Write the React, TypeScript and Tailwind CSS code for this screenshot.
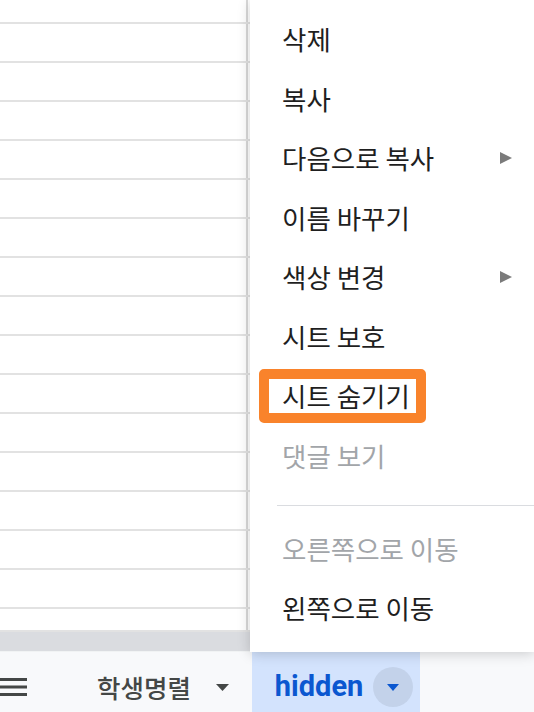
import React from 'react';

type Item = { label: string; disabled?: boolean; submenu?: boolean; marked?: boolean };

const topItems: Item[] = [
  { label: '삭제' },
  { label: '복사' },
  { label: '다음으로 복사', submenu: true },
  { label: '이름 바꾸기' },
  { label: '색상 변경', submenu: true },
  { label: '시트 보호' },
  { label: '시트 숨기기', marked: true },
  { label: '댓글 보기', disabled: true },
];

const moveItems: Item[] = [
  { label: '오른쪽으로 이동', disabled: true },
  { label: '왼쪽으로 이동' },
];

// row heights of the sheet behind the menu (border-box, 2px bottom border included)
const rowHeights = [
  'h-[24px]', 'h-[39px]', 'h-[39px]', 'h-[39px]', 'h-[39px]', 'h-[39px]', 'h-[39px]', 'h-[39px]',
  'h-[39px]', 'h-[39px]', 'h-[39px]', 'h-[39px]', 'h-[39px]', 'h-[39px]', 'h-[39px]', 'h-[39px]',
  'h-[23px]',
];

function MenuRow({ item }: { item: Item }) {
  return (
    <div className="flex h-[59.6px] items-center justify-between pl-[32px] pr-[22px]">
      {item.marked ? (
        <span className="-ml-[23px] inline-block rounded-[5px] border-[10px] border-[#f9832b] pl-[13px] pr-[6px] leading-[34px] text-[#1f1f1f]">
          {item.label}
        </span>
      ) : (
        <span className={item.disabled ? 'text-[#a2a5a9]' : 'text-[#1f1f1f]'}>{item.label}</span>
      )}
      {item.submenu && (
        <svg width="12" height="12" viewBox="0 0 12 12">
          <polygon points="0,0 12,6 0,12" fill="#7b7b7b" />
        </svg>
      )}
    </div>
  );
}

export default function App() {
  return (
    <div className="relative h-[712px] w-[534px] overflow-hidden bg-white font-['Noto_Sans_CJK_KR','Noto_Sans',sans-serif]">
      {/* Sheet grid */}
      <div className="flex flex-col">
        {rowHeights.map((h, i) => (
          <div key={i} className={`flex border-b-2 border-[#e2e2e2] ${h}`}>
            <div className="w-[248px] border-r-2 border-[#d9d9d9]" />
            <div className="flex-1" />
          </div>
        ))}
      </div>

      {/* Horizontal scrollbar */}
      <div className="h-[19px] bg-[#dadce0]" />
      <div className="h-px bg-[#f1f3f4]" />

      {/* Sheet tabs */}
      <div className="flex h-[70px] items-stretch bg-[#f8f9fb]">
        <div className="flex items-center">
          <svg width="27" height="18" viewBox="0 0 27 18">
            <rect x="0" y="0" width="27" height="3" fill="#444746" />
            <rect x="0" y="7.5" width="27" height="3" fill="#444746" />
            <rect x="0" y="15" width="27" height="3" fill="#444746" />
          </svg>
        </div>
        <div className="ml-[70px] flex items-center gap-[25px]">
          <span className="text-[25.5px] font-medium text-[#444746]">학생명렬</span>
          <svg width="13" height="7" viewBox="0 0 13 7">
            <polygon points="0,0 13,0 6.5,7" fill="#444746" />
          </svg>
        </div>
        <div className="ml-[23px] flex items-center bg-[#d3e3fd] pl-[23px] pr-[7px]">
          <span className="font-['Roboto',sans-serif] text-[29px] font-bold text-[#0b57d0]">hidden</span>
          <div className="ml-[10px] flex h-[40px] w-[40px] items-center justify-center rounded-full bg-[#c3d2ea]">
            <svg width="12" height="7" viewBox="0 0 12 7">
              <polygon points="0,0 12,0 6,7" fill="#0b57d0" />
            </svg>
          </div>
        </div>
      </div>

      {/* Sheet context menu */}
      <div className="absolute left-[250px] right-0 top-0 h-[652px] bg-white pt-[9px] text-[26.5px] shadow-[0_2px_12px_rgba(0,0,0,0.18)]">
        {topItems.map((item) => (
          <MenuRow key={item.label} item={item} />
        ))}
        <div className="mb-[13px] ml-[27px] mt-[19px] h-px bg-[#dadce0]" />
        {moveItems.map((item) => (
          <MenuRow key={item.label} item={item} />
        ))}
      </div>
    </div>
  );
}
